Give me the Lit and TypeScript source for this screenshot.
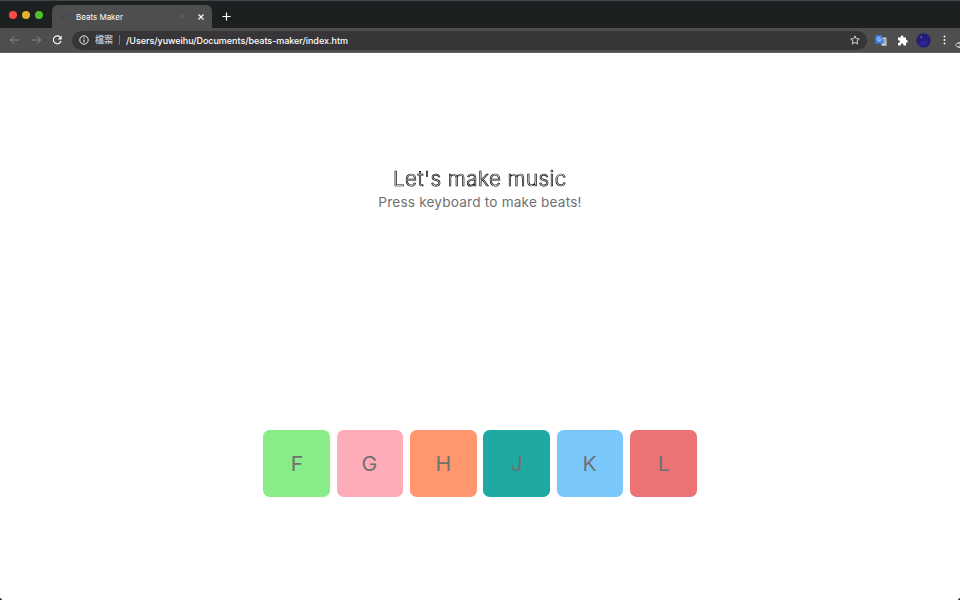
import { LitElement, html, css } from "lit";
import { customElement } from "lit/decorators.js";

const PADS: [string, string][] = [
  ["F", "green"], ["G", "pink"], ["H", "orange"],
  ["J", "teal"], ["K", "blue"], ["L", "red"],
];

@customElement("browser-chrome")
class BrowserChrome extends LitElement {
  static styles = css`
    :host { display: block; font-family: Inter, "Liberation Sans", "Noto Sans CJK TC", sans-serif; color: #fff; }
    svg { display: block; flex: none; overflow: visible; }
    .strip { height: 28px; box-sizing: border-box; background: #1c2021; border-top: 1px solid #43474a; display: flex; align-items: flex-end; }
    .lights { display: flex; gap: 5.4px; padding-left: 8.5px; width: 43.5px; height: 27px; align-items: center; }
    .light { width: 8px; height: 8px; border-radius: 50%; background: #fb4b44; }
    .light.min { background: #e2b32b; }
    .light.max { background: #4fc02b; }
    .tab { width: 160px; height: 23px; box-sizing: border-box; padding: 0 7px 0 9px; background: #4e4e4e; border-radius: 6px 6px 0 0; display: flex; align-items: center; font-size: 8px; }
    .tab .name { margin-left: 6px; flex: 1; }
    .tab .speaker { margin-right: 10px; }
    .plus { margin: 0 0 7px 10px; }
    .bar { height: 25px; box-sizing: border-box; background: #4e4e4e; border-bottom: 1px solid #626262; display: flex; align-items: center; padding-left: 9px; }
    .bar .next { margin-left: 10.5px; }
    .bar .reload { margin-left: 10.5px; }
    .address { width: 795px; height: 19px; box-sizing: border-box; margin-left: 9px; border-radius: 10px; background: #373538; display: flex; align-items: center; padding: 0 7px; font-size: 9px; font-weight: 500; }
    .kind { margin-left: 6px; color: #bfbfbf; font-size: 9px; font-weight: 700; width: 19px; line-height: 12px; white-space: nowrap; }
    .line { width: 1px; height: 10px; background: #747276; margin: 0 6px 0 5px; }
    .path { flex: 1; white-space: nowrap; letter-spacing: -.04px; }
    .tab .name { letter-spacing: -.01px; }
    .translate { margin-left: 8px; }
    .puzzle { margin-left: 9.5px; }
    .avatar { margin-left: 8px; }
    .dots { margin-left: 12.5px; }
  `;
  render() {
    return html`
      <div class="strip">
        <div class="lights"><i class="light"></i><i class="light min"></i><i class="light max"></i></div>
        <div class="tab">
          <svg width="9" height="9" viewBox="0 0 9 9"><circle cx="4.5" cy="4.5" r="4" fill="#454749"/><path d="M1 3l2 1 1 2-1 2M5 1l-1 1 2 1 2-1M6 5l2 0-1 2-1-1z" stroke="#54575a" fill="none"/></svg>
          <span class="name">Beats Maker</span>
          <svg class="speaker" width="7" height="7" viewBox="0 0 7 7"><path d="M0 2.4h1.5L3.5.8v5.4L1.5 4.6H0zM4.7 2v3" fill="#5b5b5b" stroke="#5b5b5b" stroke-width=".5"/></svg>
          <svg width="8" height="8" viewBox="0 0 8 8"><path d="M1.5 1.5l5 5m0-5l-5 5" stroke="#fff" stroke-width="1.1"/></svg>
        </div>
        <svg class="plus" width="9" height="9" viewBox="0 0 9 9"><path d="M4.5 .4v8.2M.4 4.5h8.2" stroke="#fff" stroke-width="1.2"/></svg>
      </div>
      <div class="bar">
        <svg width="11" height="10" viewBox="0 0 11 10"><path d="M10 5H1.5M5.2 1.2L1.4 5l3.8 3.8" fill="none" stroke="#8b8b8b"/></svg>
        <svg class="next" width="11" height="10" viewBox="0 0 11 10"><path d="M1 5h8.5M5.8 1.2L9.6 5 5.8 8.8" fill="none" stroke="#8b8b8b"/></svg>
        <svg class="reload" width="11" height="10" viewBox="0 0 11 10"><path d="M8.2 2.2A3.9 3.9 0 1 0 9 6" fill="none" stroke="#fff" stroke-width="1.1"/><path d="M9.7 .4v4H5.7z" fill="#fff"/></svg>
        <div class="address">
          <svg width="10" height="10" viewBox="0 0 10 10"><circle cx="5" cy="5" r="4.2" fill="none" stroke="#eee"/><path d="M5 2.3v1.1M5 4.4v3.2" stroke="#eee" stroke-width="1.1"/></svg>
          <span class="kind">檔案</span><i class="line"></i>
          <span class="path">/Users/yuweihu/Documents/beats-maker/index.htm</span>
          <svg width="10" height="10" viewBox="0 0 10 10"><path d="M5 .9l1.2 2.8 3.1.3-2.4 2 .8 3L5 7.4 2.3 9l.8-3-2.4-2 3.1-.3z" fill="none" stroke="#ddd" stroke-width=".9"/></svg>
        </div>
        <svg class="translate" width="12" height="11" viewBox="0 0 12 11"><path d="M5 2.5h6.5v8.3H6.8z" fill="#c9cbcd"/><path d="M7 5h4M9 4v1M10.2 5Q9.8 7 7.5 8M8 6l2.5 2.4" fill="none" stroke="#777" stroke-width=".7"/><path d="M.4.3h6.3l2 8.3H.4z" fill="#3f83ee"/><path d="M5.4 3.2a1.7 1.7 0 1 0 .3 1.5H4" fill="none" stroke="#dceaff" stroke-width=".8"/></svg>
        <svg class="puzzle" width="11" height="11" viewBox="0 0 11 11"><path d="M1 2.4h2.6V2a1.4 1.4 0 0 1 2.8 0v.4H9V5h.3a1.4 1.4 0 0 1 0 2.8H9v2.7H6.5V10a1.4 1.4 0 0 0-2.8 0v.5H1V8h.5a1.4 1.4 0 0 0 0-2.8H1z" fill="#fff"/></svg>
        <svg class="avatar" width="15" height="15" viewBox="0 0 15 15"><circle cx="7.5" cy="7.5" r="7.2" fill="#221d78"/><path d="M2 10q5-3 10-2-1 5-5 5T2 10" fill="#2e2693"/><path d="M5.2 3.2v2" stroke="#a29dbd" stroke-width=".9"/></svg>
        <svg class="dots" width="3" height="10" viewBox="0 0 3 10" fill="#eee"><circle cx="1.5" cy="1.5" r="1"/><circle cx="1.5" cy="5" r="1"/><circle cx="1.5" cy="8.5" r="1"/></svg>
      </div>`;
  }
}

@customElement("app-root")
class AppRoot extends LitElement {
  static styles = css`
    :host { display: block; position: relative; width: 960px; height: 600px; overflow: hidden; background: #fff; font-family: Inter, "Liberation Sans", sans-serif; color: #707070; }
    main { height: 547px; box-sizing: border-box; padding-top: 113px; display: flex; flex-direction: column; align-items: center; }
    h1, p { margin: 0; white-space: nowrap; text-align: center; }
    h1 { font-size: 20.6px; line-height: 26px; font-weight: 300; letter-spacing: .45px; color: #fff; -webkit-text-stroke: .7px #000; will-change: transform; }
    p { font-size: 13.6px; line-height: 20px; letter-spacing: .2px; }
    .pads { margin-top: 218px; display: flex; gap: 6.7px; }
    .pad { width: 66.7px; height: 66.7px; border-radius: 6.7px; display: flex; align-items: center; justify-content: center; font-size: 20px; font-weight: 400; padding-top: 1px; box-sizing: border-box; }
    .pad span { display: block; transform: scaleX(1.06); }
    .green { background: #88ed88; } .pink { background: #ffacb9; } .orange { background: #ff966e; }
    .teal { background: #1eaaa2; } .blue { background: #7ac8fb; } .red { background: #ec7375; }
    .cursor { position: absolute; left: 955px; top: 41px; }
    .corner { position: absolute; bottom: 0; left: 0; width: 2px; height: 2px; background: radial-gradient(circle at 100% 0, transparent 1.4px, #333 1.6px); }
    .corner.right { left: auto; right: 0; transform: scaleX(-1); }
  `;
  render() {
    return html`
      <browser-chrome></browser-chrome>
      <main>
        <h1>Let's make music</h1>
        <p>Press keyboard to make beats!</p>
        <div class="pads">${PADS.map(([k, c]) => html`<div class="pad ${c}"><span>${k}</span></div>`)}</div>
      </main>
      <svg class="cursor" width="8" height="8" viewBox="0 0 8 8"><path d="M.5 4L3 1.5v1.7L5 1v6L3 4.8v1.7z" fill="#222" stroke="#eee" stroke-width=".9"/></svg>
      <i class="corner"></i><i class="corner right"></i>`;
  }
}
